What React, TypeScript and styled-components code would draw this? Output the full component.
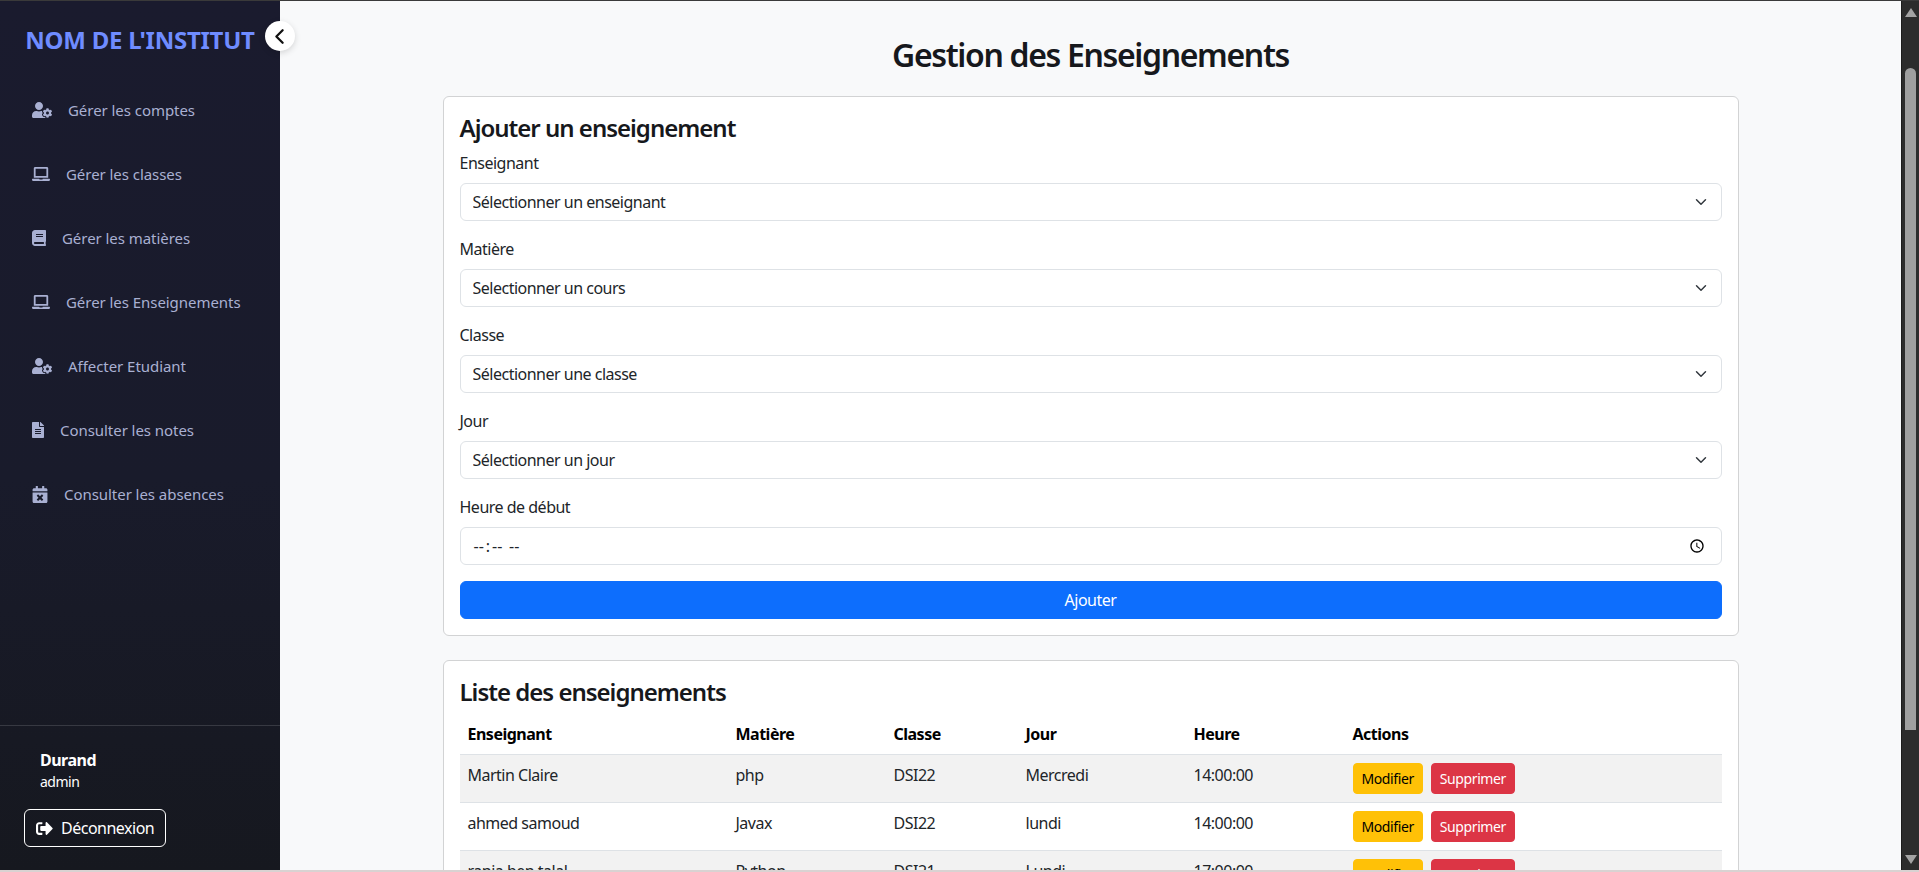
import { createGlobalStyle, styled } from "styled-components";
import { ChevronLeft } from "lucide-react";
import { FaBook, FaCalendarTimes, FaFileAlt, FaLaptop, FaSignOutAlt, FaUserCog } from "react-icons/fa";

const GlobalStyle = createGlobalStyle`
  * {
    box-sizing: border-box;
  }

  html,
  body {
    margin: 0;
    height: 100%;
    overflow: hidden;
  }

  body {
    font-family: "Noto Sans", "Open Sans", sans-serif;
    font-size: 16px;
    line-height: 1.5;
    letter-spacing: -0.5px;
    color: #212529;
    background: #f8f9fa;
  }
`;

const menu = [
  { label: "Gérer les comptes", icon: <FaUserCog />, w: 20, h: 16 },
  { label: "Gérer les classes", icon: <FaLaptop />, w: 18, h: 14.4 },
  { label: "Gérer les matières", icon: <FaBook />, w: 14, h: 16 },
  { label: "Gérer les Enseignements", icon: <FaLaptop />, w: 18, h: 14.4 },
  { label: "Affecter Etudiant", icon: <FaUserCog />, w: 20, h: 16 },
  { label: "Consulter les notes", icon: <FaFileAlt />, w: 12, h: 16 },
  { label: "Consulter les absences", icon: <FaCalendarTimes />, w: 16, h: 17 },
];

const selects = [
  { label: "Enseignant", placeholder: "Sélectionner un enseignant" },
  { label: "Matière", placeholder: "Selectionner un cours" },
  { label: "Classe", placeholder: "Sélectionner une classe" },
  { label: "Jour", placeholder: "Sélectionner un jour" },
];

const columns = [
  { title: "Enseignant", width: 268 },
  { title: "Matière", width: 158 },
  { title: "Classe", width: 132 },
  { title: "Jour", width: 168 },
  { title: "Heure", width: 159 },
  { title: "Actions", width: 377 },
];

const rows = [
  ["Martin Claire", "php", "DSI22", "Mercredi", "14:00:00"],
  ["ahmed samoud", "Javax", "DSI22", "lundi", "14:00:00"],
  ["rania ben talal", "Python", "DSI21", "Lundi", "17:00:00"],
];

function App() {
  return (
    <>
      <GlobalStyle />
      <Frame>
        <Sidebar>
          <Brand>NOM DE L'INSTITUT</Brand>
          <Toggle type="button" aria-label="Réduire le menu">
            <ChevronLeft size={25} strokeWidth={2.2} />
          </Toggle>
          <Nav>
            {menu.map((item) => (
              <NavItem key={item.label} href="#" $iconWidth={item.w} $iconHeight={item.h}>
                {item.icon}
                {item.label}
              </NavItem>
            ))}
          </Nav>
          <SideFooter>
            <UserName>Durand</UserName>
            <UserRole>admin</UserRole>
            <LogoutButton type="button">
              <FaSignOutAlt />
              Déconnexion
            </LogoutButton>
          </SideFooter>
        </Sidebar>

        <Main>
          <Container>
            <PageTitle>Gestion des Enseignements</PageTitle>

            <Card>
              <CardTitle>Ajouter un enseignement</CardTitle>
              <form>
                {selects.map((field) => (
                  <Field key={field.label}>
                    <Label>{field.label}</Label>
                    <Select defaultValue="">
                      <option value="">{field.placeholder}</option>
                    </Select>
                  </Field>
                ))}
                <Field>
                  <Label>Heure de début</Label>
                  <TimeInput type="time" />
                </Field>
                <SubmitButton type="button">Ajouter</SubmitButton>
              </form>
            </Card>

            <Card>
              <CardTitle>Liste des enseignements</CardTitle>
              <Table>
                <colgroup>
                  {columns.map((col) => (
                    <col key={col.title} width={col.width} />
                  ))}
                </colgroup>
                <thead>
                  <tr>
                    {columns.map((col) => (
                      <Th key={col.title}>{col.title}</Th>
                    ))}
                  </tr>
                </thead>
                <tbody>
                  {rows.map((row) => (
                    <Row key={row[0]}>
                      {row.map((cell, i) => (
                        <Td key={i}>{cell}</Td>
                      ))}
                      <Td>
                        <Actions>
                          <SmallButton type="button" $variant="warning">
                            Modifier
                          </SmallButton>
                          <SmallButton type="button" $variant="danger">
                            Supprimer
                          </SmallButton>
                        </Actions>
                      </Td>
                    </Row>
                  ))}
                </tbody>
              </Table>
            </Card>
          </Container>
        </Main>

        <Scrollbar>
          <ArrowUp />
          <Thumb />
          <ArrowDown />
        </Scrollbar>
      </Frame>
    </>
  );
}

const Frame = styled.div`
  display: flex;
  height: 100vh;
  border-top: 1px solid #3a3a3a;
  border-bottom: 2px solid #d9d2d2;
  overflow: hidden;
`;

const Sidebar = styled.aside`
  position: relative;
  flex: 0 0 280px;
  display: flex;
  flex-direction: column;
  background: linear-gradient(180deg, #1a1b2e 0%, #191b2b 55%, #16181f 100%);
`;

const Brand = styled.div`
  height: 77px;
  padding-top: 21px;
  text-align: center;
  font-size: 24px;
  line-height: 36px;
  font-weight: 700;
  letter-spacing: -0.25px;
  white-space: nowrap;
  color: #6f8cff;
`;

const Toggle = styled.button`
  position: absolute;
  top: 20px;
  left: 265px;
  width: 30px;
  height: 30px;
  padding: 0 2px 0 0;
  display: flex;
  align-items: center;
  justify-content: center;
  border: none;
  border-radius: 50%;
  background: #fff;
  color: #111;
  box-shadow: 0 2px 6px rgba(0, 0, 0, 0.15);
`;

const Nav = styled.nav`
  display: flex;
  flex-direction: column;
`;

const NavItem = styled.a<{ $iconWidth: number; $iconHeight: number }>`
  height: 64px;
  padding-left: 32px;
  display: flex;
  align-items: center;
  gap: 16px;
  font-size: 15px;
  letter-spacing: -0.05px;
  color: #a9b0d2;
  text-decoration: none;

  svg {
    width: ${(p) => p.$iconWidth}px;
    height: ${(p) => p.$iconHeight}px;
    flex: none;
  }
`;

const SideFooter = styled.div`
  margin-top: auto;
  padding: 23px 24px 23px;
  border-top: 1px solid rgba(255, 255, 255, 0.14);
  color: #fff;
`;

const UserName = styled.div`
  padding-left: 16px;
  font-size: 16px;
  line-height: 23px;
  font-weight: 700;
`;

const UserRole = styled.div`
  padding-left: 16px;
  font-size: 14px;
  line-height: 20px;
  margin-bottom: 17px;
`;

const LogoutButton = styled.button`
  width: 142px;
  height: 38px;
  padding: 0 0 0 11px;
  display: flex;
  align-items: center;
  gap: 8px;
  background: transparent;
  border: 1px solid #fff;
  border-radius: 6px;
  color: #fff;
  font: inherit;
  letter-spacing: -0.5px;

  svg {
    width: 17px;
    height: 17px;
  }
`;

const Main = styled.main`
  flex: 1;
  min-width: 0;
  overflow: hidden;
`;

const Container = styled.div`
  width: 1320px;
  margin: 0 auto;
  padding: 35px 12px 0;
`;

const PageTitle = styled.h1`
  margin: 0 0 22px;
  text-align: center;
  font-size: 32px;
  line-height: 38px;
  font-weight: 600;
  letter-spacing: -1.35px;
  color: #16181c;
`;

const Card = styled.section`
  margin-bottom: 24px;
  padding: 16px;
  background: #fff;
  border: 1px solid #d2d3d4;
  border-radius: 6px;
`;

const CardTitle = styled.h2`
  margin: 0 0 8px;
  font-size: 24px;
  line-height: 30px;
  font-weight: 600;
  letter-spacing: -1px;
  color: #16181c;
`;

const Field = styled.div`
  margin-bottom: 16px;
`;

const Label = styled.label`
  display: block;
  margin-bottom: 8px;
`;

const Select = styled.select`
  display: block;
  width: 100%;
  height: 38px;
  padding: 0 36px 0 12px;
  appearance: none;
  font: inherit;
  letter-spacing: inherit;
  color: #212529;
  background: #fff url("data:image/svg+xml,%3csvg xmlns='http://www.w3.org/2000/svg' viewBox='0 0 16 16'%3e%3cpath fill='none' stroke='%23343a40' stroke-linecap='round' stroke-linejoin='round' stroke-width='2' d='m2 5 6 6 6-6'/%3e%3c/svg%3e") no-repeat right 12px center / 16px 12px;
  border: 1px solid #dee2e6;
  border-radius: 6px;
`;

const TimeInput = styled.input`
  display: block;
  width: 100%;
  height: 38px;
  padding: 0 12px;
  font: inherit;
  color: #212529;
  background: #fff;
  border: 1px solid #dee2e6;
  border-radius: 6px;

  &::-webkit-datetime-edit-fields-wrapper {
    word-spacing: 4px;
    letter-spacing: 1px;
  }

  &::-webkit-datetime-edit-text {
    padding: 0 1px;
  }
`;

const SubmitButton = styled.button`
  display: block;
  width: 100%;
  height: 38px;
  font: inherit;
  letter-spacing: inherit;
  color: #fff;
  background: #0d6efd;
  border: 1px solid #0d6efd;
  border-radius: 6px;
`;

const Table = styled.table`
  width: 100%;
  table-layout: fixed;
  border-collapse: collapse;
`;

const Th = styled.th`
  padding: 7px 8px 8px;
  text-align: left;
  font-weight: 700;
  color: #000;
  border-bottom: 1px solid #dee2e6;
`;

const Row = styled.tr`
  border-bottom: 1px solid #dee2e6;

  &:nth-child(odd) {
    background: #f2f2f2;
  }
`;

const Td = styled.td`
  padding: 8px;
  vertical-align: top;
`;

const Actions = styled.div`
  display: flex;
  gap: 8px;
`;

const SmallButton = styled.button<{ $variant: "warning" | "danger" }>`
  height: 31px;
  padding: 0 8px;
  font: inherit;
  font-size: 14px;
  letter-spacing: -0.4px;
  border-radius: 4px;
  border: 1px solid ${(p) => (p.$variant === "warning" ? "#ffc107" : "#dc3545")};
  background: ${(p) => (p.$variant === "warning" ? "#ffc107" : "#dc3545")};
  color: ${(p) => (p.$variant === "warning" ? "#000" : "#fff")};
`;

const Scrollbar = styled.div`
  flex: 0 0 18px;
  display: flex;
  flex-direction: column;
  align-items: center;
  background: #2c2c2c;
  border-left: 1px solid #1c1c1c;
`;

const ArrowUp = styled.div`
  margin-top: 7px;
  width: 0;
  height: 0;
  border-left: 6px solid transparent;
  border-right: 6px solid transparent;
  border-bottom: 9px solid #a3a3a3;
`;

const Thumb = styled.div`
  margin-top: 51px;
  width: 11px;
  height: 662px;
  border-radius: 6px 6px 0 0;
  background: #9f9f9f;
`;

const ArrowDown = styled.div`
  margin-top: auto;
  margin-bottom: 6px;
  width: 0;
  height: 0;
  border-left: 6px solid transparent;
  border-right: 6px solid transparent;
  border-top: 9px solid #a3a3a3;
`;

export default App;
